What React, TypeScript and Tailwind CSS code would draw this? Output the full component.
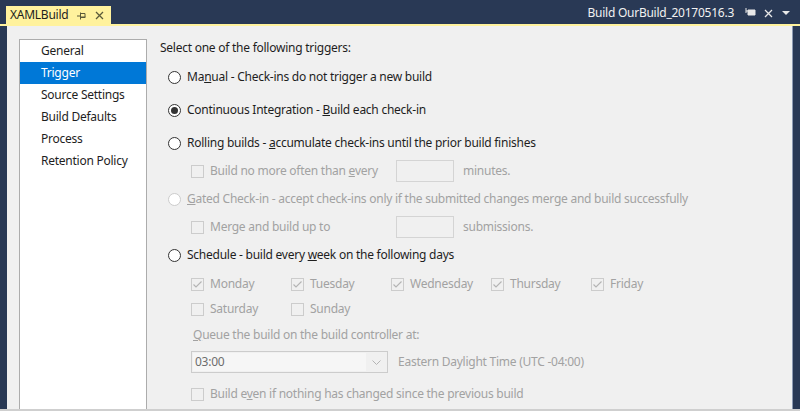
import React from "react";

const dim = "text-[#a2a2a2]";

function Radio({ checked = false, disabled = false }: { checked?: boolean; disabled?: boolean }) {
  return (
    <span
      className={`flex h-[13px] w-[13px] shrink-0 items-center justify-center rounded-full border bg-white ${
        disabled ? "border-[#cccccc]" : "border-[#333333]"
      }`}
    >
      {checked && <span className="h-[7px] w-[7px] rounded-full bg-[#333333]" />}
    </span>
  );
}

function Check({ checked = false }: { checked?: boolean }) {
  return (
    <span className="flex h-[13px] w-[13px] shrink-0 items-center justify-center border border-[#cccccc] bg-[#f0f0f0]">
      {checked && (
        <svg width="11" height="11" viewBox="0 0 11 11">
          <path d="M1.5 5.5 L4 8 L9.5 2.5" fill="none" stroke="#b4b4b4" strokeWidth="1.1" />
        </svg>
      )}
    </span>
  );
}

function Day({ label, checked }: { label: string; checked?: boolean }) {
  return (
    <div className="flex w-[100px] items-center gap-[6px]">
      <Check checked={checked} />
      <span className={dim}>{label}</span>
    </div>
  );
}

const nav = ["General", "Trigger", "Source Settings", "Build Defaults", "Process", "Retention Policy"];

export default function App() {
  return (
    <div
      className="flex h-[411px] w-[800px] flex-col overflow-hidden bg-[#293955] text-[12px] tracking-[-0.25px] text-[#1e1e1e]"
      style={{ fontFamily: '"Noto Sans", "Open Sans", sans-serif' }}
    >
      {/* document well header */}
      <div className="flex h-[24px] shrink-0 items-end">
        <div className="ml-[6px] flex h-[18px] w-[105px] items-center bg-[#fff29d] pl-[4px]">
          <span className="text-[#1e1e1e]">XAMLBuild</span>
          <svg className="ml-[9px]" width="9" height="9" viewBox="0 0 9 9">
            <path d="M0 5h3 M3.5 1.5v7 M3.5 2.5h4.5v4h-4.5 M3.5 6h5" fill="none" stroke="#5b5b3a" strokeWidth="1" />
          </svg>
          <svg className="ml-[9px]" width="9" height="9" viewBox="0 0 9 9">
            <path d="M1 1 L8 8 M8 1 L1 8" stroke="#5b5b3a" strokeWidth="1.3" />
          </svg>
        </div>
        <div className="flex-1" />
        <div className="mb-[2px] flex items-center text-[#f1f1f1]">
          <span>Build OurBuild_20170516.3</span>
          <svg className="ml-[11px]" width="11" height="10" viewBox="0 0 11 10">
            <path d="M1 0v5 M1 3h2 M3 2h7v5h-7z" fill="#e8e8e8" stroke="#e8e8e8" strokeWidth="1" />
          </svg>
          <svg className="ml-[8px]" width="9" height="9" viewBox="0 0 9 9">
            <path d="M1 1 L8 8 M8 1 L1 8" stroke="#e8e8e8" strokeWidth="1.3" />
          </svg>
          <svg className="ml-[9px] mr-[10px]" width="8" height="5" viewBox="0 0 8 5">
            <path d="M0 0h8L4 4z" fill="#e8e8e8" />
          </svg>
        </div>
      </div>
      <div className="h-[2px] shrink-0 bg-[#fff29d]" />

      {/* body */}
      <div className="flex min-h-0 flex-1 pl-[1px]">
        <div className="ml-[6px] mr-[7px] flex flex-1 border-r border-[#8d9ab2] bg-[#f0f0f0]">
          {/* left list */}
          <div className="ml-[12px] mt-[13px] w-[128px] shrink-0 border border-b-0 border-[#acacac] bg-white">
            {nav.map((n) => (
              <div
                key={n}
                className={`flex h-[22px] items-center pl-[21px] ${
                  n === "Trigger" ? "bg-[#0078d7] text-white" : "text-[#1e1e1e]"
                }`}
              >
                {n}
              </div>
            ))}
          </div>

          {/* trigger options */}
          <div className="ml-[13px] flex flex-1 flex-col pt-[11px]">
            <div className="flex h-[22px] items-center">Select one of the following triggers:</div>

            <div className="mt-[7px] flex h-[22px] items-center gap-[6px] pl-[8px]">
              <Radio />
              <span>
                Ma<u>n</u>ual - Check-ins do not trigger a new build
              </span>
            </div>

            <div className="mt-[11px] flex h-[22px] items-center gap-[6px] pl-[8px]">
              <Radio checked />
              <span>
                Continuous Integration - <u>B</u>uild each check-in
              </span>
            </div>

            <div className="mt-[11px] flex h-[22px] items-center gap-[6px] pl-[8px]">
              <Radio />
              <span>
                Rolling builds - <u>a</u>ccumulate check-ins until the prior build finishes
              </span>
            </div>

            <div className="mt-[6px] flex h-[22px] items-center pl-[31px]">
              <div className="flex w-[205px] items-center gap-[6px]">
                <Check />
                <span className={dim}>
                  Build no more often than <u>e</u>very
                </span>
              </div>
              <div className="h-[22px] w-[58px] border border-[#d4d4d4] bg-[#f0f0f0]" />
              <span className={`ml-[9px] ${dim}`}>minutes.</span>
            </div>

            <div className="mt-[6px] flex h-[22px] items-center gap-[6px] pl-[8px]">
              <Radio disabled />
              <span className={dim}>
                <u>G</u>ated Check-in - accept check-ins only if the submitted changes merge and build successfully
              </span>
            </div>

            <div className="mt-[6px] flex h-[22px] items-center pl-[31px]">
              <div className="flex w-[205px] items-center gap-[6px]">
                <Check />
                <span className={dim}>Merge and build up to</span>
              </div>
              <div className="h-[22px] w-[58px] border border-[#d4d4d4] bg-[#f0f0f0]" />
              <span className={`ml-[9px] ${dim}`}>submissions.</span>
            </div>

            <div className="mt-[6px] flex h-[22px] items-center gap-[6px] pl-[8px]">
              <Radio />
              <span>
                Schedule - build every <u>w</u>eek on the following days
              </span>
            </div>

            <div className="mt-[7px] flex h-[22px] items-center pl-[31px]">
              <Day label="Monday" checked />
              <Day label="Tuesday" checked />
              <Day label="Wednesday" checked />
              <Day label="Thursday" checked />
              <Day label="Friday" checked />
            </div>

            <div className="mt-[3px] flex h-[22px] items-center pl-[31px]">
              <Day label="Saturday" />
              <Day label="Sunday" />
            </div>

            <div className={`mt-[4px] flex h-[22px] items-center pl-[33px] ${dim}`}>
              <span>
                <u>Q</u>ueue the build on the build controller at:
              </span>
            </div>

            <div className="mt-[5px] flex h-[22px] items-center pl-[31px]">
              <div className="flex h-[22px] w-[197px] items-center border border-[#cccccc] bg-[#f0f0f0] p-[1px]">
                <div className="flex h-full flex-1 items-center bg-[#f6f6f6] pl-[2px] text-[#6d6d6d]">03:00</div>
                <div className="flex w-[20px] items-center justify-center">
                  <svg width="9" height="5" viewBox="0 0 9 5">
                    <path d="M0.5 0.5 L4.5 4.5 L8.5 0.5" fill="none" stroke="#b4b4b4" strokeWidth="1" />
                  </svg>
                </div>
              </div>
              <span className={`ml-[10px] ${dim}`}>Eastern Daylight Time (UTC -04:00)</span>
            </div>

            <div className="mt-[10px] flex h-[22px] items-center gap-[6px] pl-[31px]">
              <Check />
              <span className={dim}>
                Build e<u>v</u>en if nothing has changed since the previous build
              </span>
            </div>
          </div>
        </div>
      </div>
      <div className="h-[2px] shrink-0 bg-[#cfcfcf]" />
    </div>
  );
}
